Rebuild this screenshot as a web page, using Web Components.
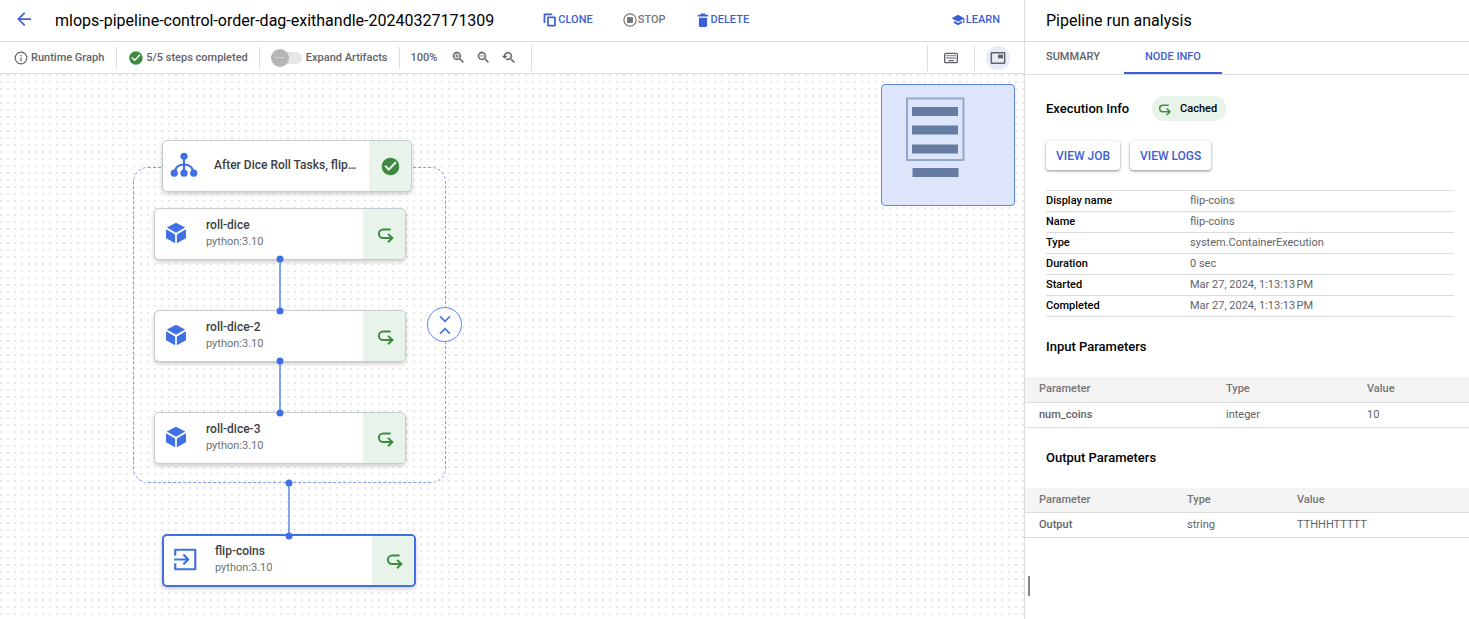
<!DOCTYPE html>
<html lang="en">
<head>
<meta charset="utf-8">
<title>Pipeline run</title>
<style>
  html, body { margin: 0; }
  body { font-family: Roboto, "Liberation Sans", sans-serif; font-size: 11px; line-height: 16px; color: #000; background: #fff;
    --blue: #3d5fd6; --node-blue: #4070e4; --grey: #5f6368; --line: #dcdcde; --green: #3f8a43; --green-bg: #e8f3ea; }
</style>
</head>
<body>
<pipeline-app></pipeline-app>

<template id="app">
  <style>
    :host { display: grid; grid-template-columns: minmax(0, 1fr) 445px; min-height: 100vh; }
    main { display: flex; flex-direction: column; min-width: 0; }
    graph-canvas { flex: 1; }
  </style>
  <main>
    <run-header></run-header>
    <graph-toolbar></graph-toolbar>
    <graph-canvas></graph-canvas>
  </main>
  <analysis-panel></analysis-panel>
</template>

<template id="header">
  <style>
    :host { display: flex; align-items: center; height: 41px; padding: 0 24px 0 16px; border-bottom: 1px solid var(--line); }
    h1 { margin: 0 49px 0 23px; font-size: 16px; line-height: 24px; font-weight: 400; white-space: nowrap; }
    nav { display: flex; gap: 30px; flex: 1; padding-bottom: 2px; }
    .learn { margin-left: auto; }
    .back { display: flex; color: var(--blue); margin-bottom: 4px; }
  </style>
  <a class="back" href="#" aria-label="Back"><m-icon name="back" size="16"></m-icon></a>
  <h1>mlops-pipeline-control-order-dag-exithandle-20240327171309</h1>
  <nav>
    <action-button icon="copy">CLONE</action-button>
    <action-button icon="stop" muted>STOP</action-button>
    <action-button icon="delete">DELETE</action-button>
    <action-button icon="school" class="learn">LEARN</action-button>
  </nav>
</template>

<template id="action">
  <style>
    :host { display: block; color: var(--blue); }
    :host([muted]) { color: #757575; }
    button { display: flex; align-items: center; gap: 1px; padding: 0; border: 0; background: none; font: 500 11px/16px Roboto, sans-serif; color: inherit; }
  </style>
  <button type="button"><m-icon size="14"></m-icon><slot></slot></button>
</template>

<template id="toolbar">
  <style>
    :host { display: flex; align-items: center; height: 31px; border-bottom: 1px solid var(--line); color: var(--grey); font-weight: 500; }
    .cell { display: flex; align-items: center; box-sizing: border-box; height: 22px; border-right: 1px solid var(--line); white-space: nowrap; }
    .tall { height: 26px; }
    .runtime { padding: 0 12px 0 14px; gap: 3px; }
    .steps { padding: 0 11px; gap: 2px; }
    .steps m-icon { color: var(--green); }
    .expand { padding: 0 11px; gap: 4px; }
    .zoom { padding: 0 15px 0 11px; gap: 10px; }
    .zoom span { margin-right: 4px; }
    button { display: flex; align-items: center; justify-content: center; padding: 0; border: 0; background: none; color: inherit; }
    .end { margin-left: auto; border-left: 1px solid var(--line); width: 48px; justify-content: center; }
    .map { width: 49px; padding-right: 3px; border: 0; justify-content: center; }
    .map button { width: 24px; height: 24px; border-radius: 50%; background: #e8ebfa; }
    input { appearance: none; position: relative; margin: 0; width: 31px; height: 18px; }
    input::before { content: ""; position: absolute; left: 5px; top: 3px; width: 26px; height: 12px; border-radius: 6px; background: #e6e6e6; }
    input::after { content: ""; position: absolute; left: 0; top: 0; width: 18px; height: 18px; border-radius: 50%;
      background: linear-gradient(#d2d2d2, #d2d2d2) center / 10px 1px no-repeat #b5b5b5; }
  </style>
  <div class="cell runtime"><m-icon name="info" size="14"></m-icon>Runtime Graph</div>
  <div class="cell steps"><m-icon name="check" size="16"></m-icon>5/5 steps completed</div>
  <div class="cell expand"><input type="checkbox" role="switch" id="expand"><label for="expand">Expand Artifacts</label></div>
  <div class="cell tall zoom"><span>100%</span>
    <button type="button" aria-label="Zoom in"><m-icon name="zoomin" size="15"></m-icon></button>
    <button type="button" aria-label="Zoom out"><m-icon name="zoomout" size="15"></m-icon></button>
    <button type="button" aria-label="Reset zoom"><m-icon name="reset" size="15"></m-icon></button>
  </div>
  <div class="cell tall end"><button type="button" aria-label="Keyboard shortcuts"><m-icon name="keyboard" size="16"></m-icon></button></div>
  <div class="cell tall map"><button type="button" aria-label="Toggle minimap"><m-icon name="pip" size="16"></m-icon></button></div>
</template>

<template id="canvas">
  <style>
    :host { display: block; position: relative; min-height: 540px; overflow: hidden;
      background: conic-gradient(at 2px 2px, transparent 75%, #e8e8e8 0) 0 0 / 7px 7px; }
    .group { position: absolute; left: 133px; top: 93px; width: 311px; height: 314px; border: 1px dashed #7f9cec; border-radius: 15px; }
    graph-node, mini-map, .edges, .fold { position: absolute; }
    .edges { left: 0; top: 0; width: 480px; height: 500px; pointer-events: none; }
    .fold { left: 427px; top: 233px; width: 35px; height: 35px; padding: 0; display: grid; place-items: center;
      border: 1px solid #5f86ea; border-radius: 50%; background: #fff; color: var(--node-blue); }
    mini-map { top: 10px; right: 9px; }
  </style>
  <div class="group"></div>
  <graph-node icon="dag" status="check" name="After Dice Roll Tasks, flip…" style="left:162px;top:66px;width:250px"></graph-node>
  <graph-node icon="cube" status="cached" name="roll-dice" detail="python:3.10" style="left:154px;top:134px;width:252px"></graph-node>
  <graph-node icon="cube" status="cached" name="roll-dice-2" detail="python:3.10" style="left:154px;top:236px;width:252px"></graph-node>
  <graph-node icon="cube" status="cached" name="roll-dice-3" detail="python:3.10" style="left:154px;top:338px;width:252px"></graph-node>
  <graph-node icon="exit" status="cached" name="flip-coins" detail="python:3.10" selected style="left:162px;top:460px;width:254px"></graph-node>
  <svg class="edges" viewBox="0 0 480 500" aria-hidden="true">
    <g stroke="#86a3ee" stroke-width="2"><path d="M280 185V237M280 287V339M289 409V461"/></g>
    <g fill="#4070e4"><circle cx="280" cy="185" r="3.5"/><circle cx="280" cy="237" r="3.5"/><circle cx="280" cy="287" r="3.5"/><circle cx="280" cy="339" r="3.5"/><circle cx="289" cy="409" r="3.5"/><circle cx="289" cy="462" r="3.5"/></g>
  </svg>
  <button class="fold" type="button" aria-label="Collapse group"><m-icon name="fold" size="20"></m-icon></button>
  <mini-map></mini-map>
</template>

<template id="node">
  <style>
    :host { display: grid; grid-template-columns: 51px minmax(0, 1fr) 42px; box-sizing: border-box; height: 52px; overflow: hidden;
      border: 1px solid #c6cbcd; border-radius: 5px; background: #fff; box-shadow: 0 2px 4px rgba(0,0,0,.2); font-size: 12px; }
    :host([selected]) { height: 53px; border: 2px solid var(--node-blue); }
    .icon { display: flex; align-items: center; justify-content: center; width: 42px; padding-bottom: 2px; color: var(--node-blue); }
    .text { display: flex; flex-direction: column; justify-content: center; gap: 1px; padding-bottom: 2px; }
    .name { font-weight: 500; color: #3c4043; white-space: nowrap; }
    .detail { font-size: 11px; color: #6c7177; }
    .status { display: flex; align-items: center; justify-content: center; background: var(--green-bg); color: var(--green); }
  </style>
  <div class="icon"><m-icon size="26"></m-icon></div>
  <div class="text"><div class="name"></div><div class="detail"></div></div>
  <div class="status"><m-icon size="21"></m-icon></div>
</template>

<template id="minimap">
  <style>
    :host { display: block; box-sizing: border-box; width: 134px; height: 122px; border: 1px solid #5f86ea; border-radius: 4px; background: #dde5fa; }
    svg { display: block; }
  </style>
  <svg width="132" height="120" viewBox="882 85 132 120" aria-hidden="true">
    <rect x="907" y="98.500" width="56.500" height="61.500" fill="none" stroke="#93a7cb" stroke-width="2"/>
    <g fill="#657da3"><path d="M912 107h46v9h-46zM912 125.500h46v9h-46zM912 144.500h46v9h-46zM912.500 168h46v9h-46z"/></g>
  </svg>
</template>

<template id="panel">
  <style>
    :host { display: block; position: relative; border-left: 1px solid var(--line); min-width: 0; }
    h2 { margin: 0; height: 41px; padding-left: 21px; border-bottom: 1px solid var(--line); font-size: 16px; line-height: 41px; font-weight: 400; }
    .tabs { display: flex; gap: 3px; height: 32px; border-bottom: 1px solid var(--line); }
    .tabs button { box-sizing: border-box; padding: 0 21px; border: 0; border-bottom: 2px solid transparent; background: none; color: var(--grey); font: 500 11px/30px Roboto, sans-serif; }
    .tabs [aria-selected=true] { color: var(--blue); border-color: var(--blue); }
    .exec { display: flex; align-items: center; gap: 23px; margin: 21px 21px 20px; }
    h3 { margin: 0; font-size: 13px; line-height: 24px; font-weight: 500; }
    .badge { display: flex; align-items: center; gap: 8px; height: 25px; padding: 0 9px 0 4px; border-radius: 12px; background: var(--green-bg); font-weight: 500; }
    .badge m-icon { color: var(--green); }
    .buttons { display: flex; gap: 10px; margin: 0 21px 20px; }
    .buttons button { height: 29px; padding: 0 10px; border: 0; border-radius: 3px; background: #fff; color: var(--blue); font: 500 12px/16px Roboto, sans-serif; box-shadow: 0 1px 3px rgba(0,0,0,.45); }
    info-table { margin: 0 15px 0 21px; }
    .section { margin: 18px 21px; }
    .handle { position: absolute; left: 3px; top: 576px; width: 2px; height: 20px; background: #80868b; }
  </style>
  <h2>Pipeline run analysis</h2>
  <div class="tabs" role="tablist">
    <button type="button" role="tab" aria-selected="false">SUMMARY</button>
    <button type="button" role="tab" aria-selected="true">NODE INFO</button>
  </div>
  <div class="exec"><h3>Execution Info</h3><span class="badge"><m-icon name="cached" size="16"></m-icon>Cached</span></div>
  <div class="buttons"><button type="button">VIEW JOB</button><button type="button">VIEW LOGS</button></div>
  <info-table></info-table>
  <h3 class="section">Input Parameters</h3>
  <param-table cols="187 141 116" row="num_coins|integer|10"></param-table>
  <h3 class="section">Output Parameters</h3>
  <param-table cols="148 110 186" row="Output|string|TTHHHTTTTT"></param-table>
  <div class="handle"></div>
</template>

<template id="info">
  <style>
    :host { display: block; }
    table { width: 100%; border-collapse: collapse; table-layout: fixed; }
    tr { border-top: 1px solid var(--line); border-bottom: 1px solid var(--line); }
    th, td { padding: 2px 0; height: 16px; text-align: left; }
    th { width: 144px; font-weight: 500; }
    td { color: var(--grey); }
  </style>
  <table>
    <tr><th scope="row">Display name</th><td>flip-coins</td></tr>
    <tr><th scope="row">Name</th><td>flip-coins</td></tr>
    <tr><th scope="row">Type</th><td>system.ContainerExecution</td></tr>
    <tr><th scope="row">Duration</th><td>0 sec</td></tr>
    <tr><th scope="row">Started</th><td>Mar 27, 2024, 1:13:13&#8239;PM</td></tr>
    <tr><th scope="row">Completed</th><td>Mar 27, 2024, 1:13:13&#8239;PM</td></tr>
  </table>
</template>

<template id="params">
  <style>
    :host { display: block; }
    table { width: 100%; border-collapse: collapse; table-layout: fixed; color: var(--grey); }
    th, td { box-sizing: border-box; height: 25px; padding: 0 0 0 14px; text-align: left; font-weight: 400; border-bottom: 1px solid var(--line); }
    thead th { font-weight: 500; background: #f4f4f4; color: #757575; }
    tbody th { font-weight: 500; }
  </style>
  <table>
    <colgroup><col><col><col></colgroup>
    <thead><tr><th scope="col">Parameter</th><th scope="col">Type</th><th scope="col">Value</th></tr></thead>
    <tbody><tr><th scope="row"></th><td></td><td></td></tr></tbody>
  </table>
</template>

<script>
const ICONS = {
  back: '<path d="M20 11H7.830l5.590-5.590L12 4l-8 8 8 8 1.410-1.410L7.830 13H20v-2z" transform="translate(-3.500 -3.500) scale(1.300)"/>',
  copy: '<path d="M16 1H3c-1.100 0-2 .9-2 2v14h3V4h12V1zm4 5H9c-1.100 0-2 .9-2 2v13c0 1.100.9 2 2 2h11c1.100 0 2-.9 2-2V8c0-1.100-.9-2-2-2zm-1 14h-9V9h9v11z"/>',
  stop: '<circle cx="12" cy="12" r="10.500" fill="none" stroke="currentColor" stroke-width="2"/><path d="M7 7h10v10H7z"/>',
  delete: '<path d="M5 22c0 1.100.9 2 2 2h10c1.100 0 2-.9 2-2V8H5v14zM21 3h-4.500l-1-2h-7l-1 2H3v3h18V3z"/>',
  school: '<path d="M5 13.180v4L12 21l7-3.820v-4L12 17l-7-3.820zM12 3L1 9l11 6 9-4.910V17h2V9L12 3z"/>',
  info: '<circle cx="12" cy="12" r="10" fill="none" stroke="currentColor" stroke-width="2"/><path d="M11 6.500h2v2.500h-2zM11 11h2v7h-2z"/>',
  check: '<path d="M12 2C6.480 2 2 6.480 2 12s4.480 10 10 10 10-4.480 10-10S17.520 2 12 2zm-2 15l-5-5 1.600-1.600L10 13.800l7.400-7.400L19 8l-9 9z"/>',
  zoomin: '<path d="M15.500 14h-.79l-.28-.27A6.500 6.500 0 1 0 13.730 14.430l.27.28v.79l5 4.990L20.490 19l-4.990-5zm-6 0a4.500 4.500 0 1 1 0-9 4.500 4.500 0 0 1 0 9z" stroke="currentColor" stroke-width=".5"/><path d="M12.500 10.200h-2.300v2.300H8.800v-2.300H6.500V8.800h2.300V6.500h1.400v2.300h2.300z"/>',
  zoomout: '<path d="M15.500 14h-.79l-.28-.27A6.500 6.500 0 1 0 13.730 14.430l.27.28v.79l5 4.990L20.490 19l-4.990-5zm-6 0a4.500 4.500 0 1 1 0-9 4.500 4.500 0 0 1 0 9z" stroke="currentColor" stroke-width=".5"/><path d="M6.800 8.800h5.400v1.400H6.800z"/>',
  reset: '<path stroke="currentColor" stroke-width=".5" d="M17.010 14h-.8l-.27-.27c.98-1.140 1.570-2.610 1.570-4.230 0-3.590-2.910-6.500-6.500-6.500s-6.500 3-6.500 6.500H2l3.840 4 4.160-4H6.510C6.510 7 8.530 5 11.010 5s4.500 2.010 4.500 4.500c0 2.480-2.020 4.500-4.500 4.500-.65 0-1.260-.14-1.820-.38L7.710 15.100c.97.57 2.090.9 3.300.9 1.610 0 3.080-.59 4.220-1.570l.27.27v.79l5.010 4.990L22 19l-4.990-5z"/>',
  keyboard: '<rect x="2.500" y="5" width="19" height="14" rx="1.500" fill="none" stroke="currentColor" stroke-width="2"/><path d="M5 7.500h2v2H5zM8 7.500h2v2H8zM11 7.500h2v2h-2zM14 7.500h2v2h-2zM17 7.500h2v2h-2zM5 11h2v2H5zM8 11h2v2H8zM11 11h2v2h-2zM14 11h2v2h-2zM17 11h2v2h-2zM8 15h8v2H8z"/>',
  pip: '<rect x="2" y="4" width="20" height="16" rx="1" fill="none" stroke="currentColor" stroke-width="2.200"/><path d="M12 7h7.500v5.500H12z"/>',
  cached: '<path d="M19 6.300H10.500a4.900 4.900 0 0 0 0 9.800H21.500M16 11.300l5 4.800-5 4.800" fill="none" stroke="currentColor" stroke-width="2.300"/>',
  cube: '<path d="M12 2.500L20.500 7 12 11.800 3.500 7zM2.800 8.600l8.400 4.800v8L2.800 16.800zM21.200 8.600l-8.400 4.800v8l8.400-4.600z"/>',
  dag: '<path d="M12 3V21M3.500 20c0-6 4-8.500 8.500-8.500s8.500 2.500 8.500 8.500" fill="none" stroke="currentColor" stroke-width="2"/><circle cx="12" cy="4" r="3.300"/><circle cx="3" cy="19.500" r="3.300"/><circle cx="12" cy="19.500" r="3.300"/><circle cx="21" cy="19.500" r="3.300"/>',
  exit: '<path d="M3 8V2.500h18.500v18H3V15M2 11.500h12M10.500 7l4.500 4.500-4.500 4.500" fill="none" stroke="currentColor" stroke-width="2" stroke-linejoin="round"/>',
  fold: '<path d="M6 1.500l6 6 6-6M6 22.500l6-6 6 6" fill="none" stroke="currentColor" stroke-width="2"/>'
};

function define(tag, templateId, setup) {
  customElements.define(tag, class extends HTMLElement {
    constructor() {
      super();
      this.attachShadow({ mode: 'open' }).append(document.getElementById(templateId).content.cloneNode(true));
    }
    connectedCallback() { if (setup) setup(this, this.shadowRoot); }
  });
}

customElements.define('m-icon', class extends HTMLElement {
  static observedAttributes = ['name', 'size'];
  constructor() { super(); this.attachShadow({ mode: 'open' }); }
  connectedCallback() { this.draw(); }
  attributeChangedCallback() { this.draw(); }
  draw() {
    const s = this.getAttribute('size') || 16;
    this.shadowRoot.innerHTML = `<style>:host{display:inline-flex;flex:none}svg{display:block;overflow:visible}</style>
      <svg width="${s}" height="${s}" viewBox="0 0 24 24" fill="currentColor" aria-hidden="true">${ICONS[this.getAttribute('name')] || ''}</svg>`;
  }
});

define('action-button', 'action', (el, root) => root.querySelector('m-icon').setAttribute('name', el.getAttribute('icon')));
define('graph-node', 'node', (el, root) => {
  root.querySelector('.icon m-icon').setAttribute('name', el.getAttribute('icon'));
  root.querySelector('.status m-icon').setAttribute('name', el.getAttribute('status'));
  root.querySelector('.name').textContent = el.getAttribute('name');
  const detail = root.querySelector('.detail');
  if (!detail) return;
  if (el.hasAttribute('detail')) detail.textContent = el.getAttribute('detail'); else detail.remove();
});
define('mini-map', 'minimap');
define('info-table', 'info');
define('param-table', 'params', (el, root) => {
  const widths = el.getAttribute('cols').split(' ').map(Number);
  const total = widths.reduce((a, b) => a + b);
  root.querySelectorAll('col').forEach((c, i) => c.style.width = widths[i] * 100 / total + '%');
  const cells = root.querySelectorAll('tbody th, tbody td');
  el.getAttribute('row').split('|').forEach((t, i) => cells[i].textContent = t);
});
define('run-header', 'header');
define('graph-toolbar', 'toolbar');
define('graph-canvas', 'canvas');
define('analysis-panel', 'panel');
define('pipeline-app', 'app');
</script>
</body>
</html>
